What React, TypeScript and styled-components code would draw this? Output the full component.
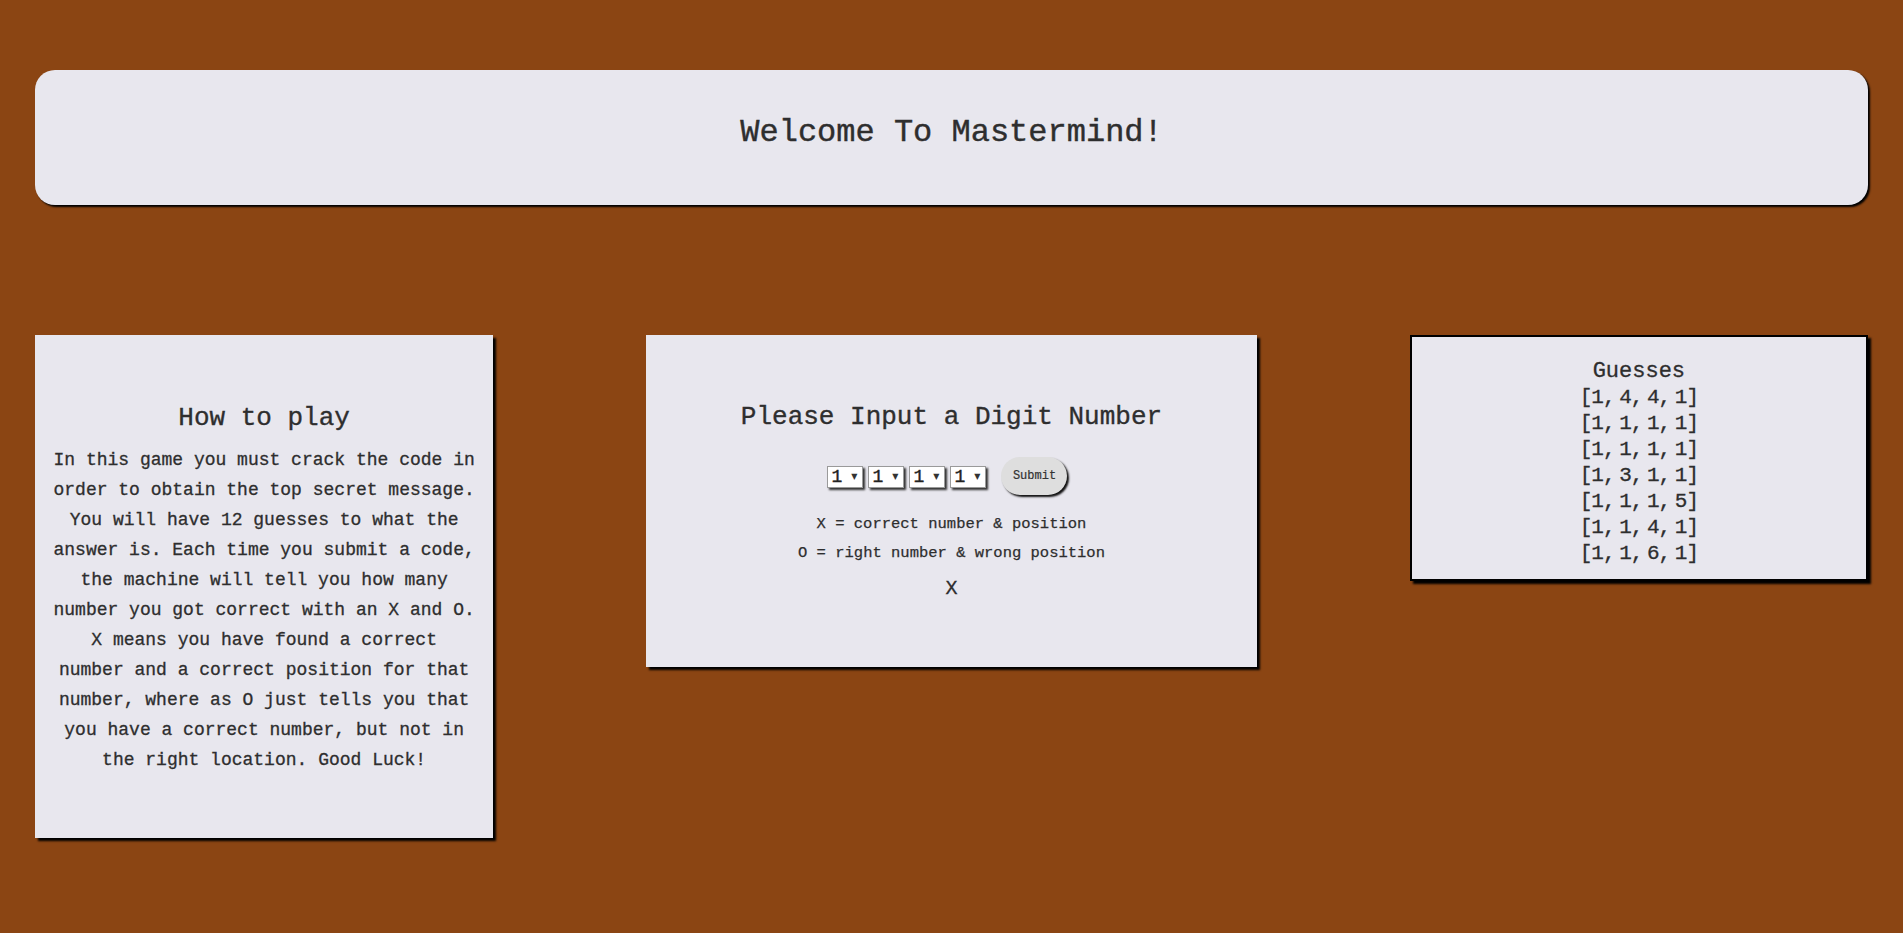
import React from "react";
import styled, { createGlobalStyle } from "styled-components";

const Global = createGlobalStyle`
  html, body {
    margin: 0;
    padding: 0;
    background: #8b4513;
  }
  body {
    font-family: "Liberation Mono", "Courier New", monospace;
    color: #2e2e2e;
  }
  * { box-sizing: border-box; }
`;

const Page = styled.div`
  padding: 70px 35px 60px;
  min-height: 933px;
  background: #8b4513;
`;

const Header = styled.header`
  height: 135px;
  padding-top: 44px;
  background: #e8e7ee;
  border-radius: 20px;
  box-shadow: 2px 2px 2px #000;
  text-align: center;
`;

const Title = styled.h1`
  margin: 0;
  font-size: 32px;
  line-height: 38px;
  font-weight: normal;
  -webkit-text-stroke: 0.4px #2e2e2e;
`;

const Row = styled.main`
  margin-top: 130px;
  display: flex;
  justify-content: space-between;
  align-items: flex-start;
`;

const Card = styled.section<{ $w: string; $bordered?: boolean }>`
  width: ${(p) => p.$w};
  background: #e8e7ee;
  box-shadow: 3px 3px 2px #000;
  border: ${(p) => (p.$bordered ? "2px solid #000" : "none")};
  text-align: center;
`;

const InfoCard = styled(Card)`
  padding: 65px 12px 63px;
`;

const GameCard = styled(Card)`
  padding: 64px 12px 63px;
`;

const GuessCard = styled(Card)`
  padding: 22px 0 12px;
`;

const Heading = styled.h2`
  margin: 0;
  font-size: 26px;
  line-height: 36px;
  font-weight: normal;
  -webkit-text-stroke: 0.35px #2e2e2e;
`;

const Body = styled.p`
  margin: 9px 0 0;
  font-size: 18px;
  line-height: 30px;
  white-space: nowrap;
  -webkit-text-stroke: 0.3px #2e2e2e;
`;

const Controls = styled.div`
  margin-top: 22px;
  padding-right: 8px;
  display: flex;
  justify-content: center;
  align-items: center;
  height: 38px;
`;

const Selects = styled.div`
  display: flex;
  gap: 5px;
  margin-right: 15px;
  margin-top: 2px;
`;

const SelectBox = styled.label`
  position: relative;
  display: flex;
  align-items: center;
  width: 36px;
  height: 22px;
  background: #fff;
  border: 1px solid #9a9a9a;
  box-shadow: 2px 2px 2px #333;
`;

const Select = styled.select`
  appearance: none;
  -webkit-appearance: none;
  border: none;
  background: transparent;
  width: 100%;
  height: 100%;
  padding: 0 0 0 3px;
  font-family: "Liberation Mono", monospace;
  font-size: 18px;
  line-height: 20px;
  color: #222;
  -webkit-text-stroke: 0.4px #222;
  outline: none;
`;

const Arrow = styled.span`
  position: absolute;
  right: 5px;
  top: 5px;
  font-size: 8px;
  line-height: 10px;
  color: #333;
  pointer-events: none;
  font-family: "DejaVu Sans", sans-serif;
`;

const Submit = styled.button`
  width: 66px;
  height: 38px;
  border: none;
  border-radius: 19px;
  background: #dedede;
  box-shadow: 2px 2px 2px #111;
  font-family: "Liberation Mono", monospace;
  font-size: 12px;
  color: #333;
  -webkit-text-stroke: 0.2px #333;
  padding: 0;
`;

const Legend = styled.p`
  margin: 0;
  font-size: 15.5px;
  line-height: 29px;
  -webkit-text-stroke: 0.25px #2e2e2e;
  &:first-of-type {
    margin-top: 15px;
  }
`;

const Result = styled.div`
  margin-top: 6px;
  font-size: 20px;
  line-height: 30px;
  -webkit-text-stroke: 0.3px #2e2e2e;
`;

const GuessTitle = styled.div`
  font-size: 22px;
  line-height: 26px;
  -webkit-text-stroke: 0.3px #2e2e2e;
`;

const GuessLine = styled.div`
  font-size: 21px;
  line-height: 26px;
  letter-spacing: -1px;
  word-spacing: -7px;
  -webkit-text-stroke: 0.3px #2e2e2e;
`;

const rules = [
  "In this game you must crack the code in",
  "order to obtain the top secret message.",
  "You will have 12 guesses to what the",
  "answer is. Each time you submit a code,",
  "the machine will tell you how many",
  "number you got correct with an X and O.",
  "X means you have found a correct",
  "number and a correct position for that",
  "number, where as O just tells you that",
  "you have a correct number, but not in",
  "the right location. Good Luck!",
];

const guesses = [
  [1, 4, 4, 1],
  [1, 1, 1, 1],
  [1, 1, 1, 1],
  [1, 3, 1, 1],
  [1, 1, 1, 5],
  [1, 1, 4, 1],
  [1, 1, 6, 1],
];

const digits = [1, 2, 3, 4, 5, 6, 7, 8, 9];

export default function App() {
  return (
    <>
      <Global />
      <Page>
        <Header>
          <Title>Welcome To Mastermind!</Title>
        </Header>
        <Row>
          <InfoCard $w="25%">
            <Heading>How to play</Heading>
            <Body>
              {rules.map((l, i) => (
                <React.Fragment key={i}>
                  {l}
                  {i < rules.length - 1 && <br />}
                </React.Fragment>
              ))}
            </Body>
          </InfoCard>
          <GameCard $w="33.333%">
            <Heading>Please Input a Digit Number</Heading>
            <Controls>
              <Selects>
                {[0, 1, 2, 3].map((k) => (
                  <SelectBox key={k}>
                    <Select defaultValue="1">
                      {digits.map((d) => (
                        <option key={d} value={d}>
                          {d}
                        </option>
                      ))}
                    </Select>
                    <Arrow>▼</Arrow>
                  </SelectBox>
                ))}
              </Selects>
              <Submit type="button">Submit</Submit>
            </Controls>
            <Legend>X = correct number &amp; position</Legend>
            <Legend>O = right number &amp; wrong position</Legend>
            <Result>X</Result>
          </GameCard>
          <GuessCard $w="25%" $bordered>
            <GuessTitle>Guesses</GuessTitle>
            {guesses.map((g, i) => (
              <GuessLine key={i}>[{g.join(", ")}]</GuessLine>
            ))}
          </GuessCard>
        </Row>
      </Page>
    </>
  );
}
